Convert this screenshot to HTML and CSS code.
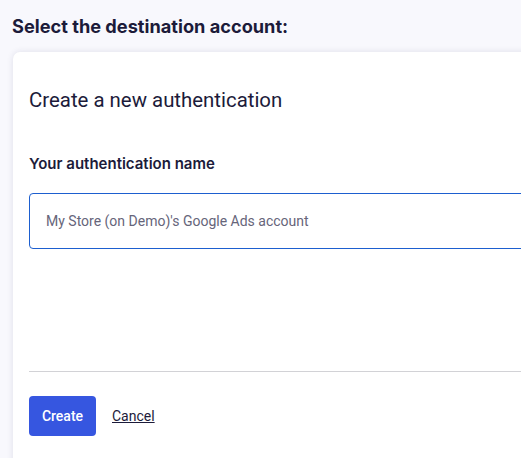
FILE: index.html
```html
<!DOCTYPE html>
<html>
<head>
<meta charset="utf-8">
<link rel="stylesheet" href="styles.css">
</head>
<body>
<div class="page">
  <h1 class="title">Select the destination account:</h1>
  <div class="card">
    <h2 class="card-title">Create a new authentication</h2>
    <label class="label">Your authentication name</label>
    <div class="input">My Store (on Demo)'s Google Ads account</div>
    <div class="spacer"></div>
    <hr class="divider">
    <div class="actions">
      <button class="btn">Create</button>
      <a class="link">Cancel</a>
    </div>
  </div>
</div>
</body>
</html>
```
FILE: styles.css
```css
html, body {
  margin: 0;
  padding: 0;
  background: #f8f8fd;
  overflow: hidden;
}
.page {
  width: 521px;
  height: 458px;
  overflow: hidden;
  font-family: Roboto, "Liberation Sans", sans-serif;
  color: #1c1b3a;
}
.title {
  margin: 0;
  padding: 14px 0 0 12px;
  font-family: Inter, Roboto, sans-serif;
  font-weight: 700;
  font-size: 18.2px;
  line-height: 24px;
  color: #1c1b3a;
}
.card {
  margin: 14px 0 0 13px;
  width: 560px;
  height: 420px;
  background: #fff;
  border-radius: 7px 0 0 0;
  box-shadow: 0 0 6px rgba(40, 40, 90, 0.12);
  padding: 36px 16px 0 16px;
  box-sizing: border-box;
}
.card-title {
  margin: 0;
  font-weight: 400;
  font-size: 20.4px;
  line-height: 24px;
  color: #1c1b3a;
}
.label {
  display: block;
  margin-top: 42px;
  font-family: Inter, Roboto, sans-serif;
  font-weight: 600;
  font-size: 15px;
  line-height: 20px;
}
.input {
  margin-top: 19px;
  width: 520px;
  height: 56px;
  box-sizing: border-box;
  border: 1px solid #1d5fcf;
  border-radius: 4px;
  padding: 0 16px;
  display: flex;
  align-items: center;
  font-size: 14px;
  color: #66657a;
}
.spacer {
  height: 122px;
}
.divider {
  margin: 0;
  border: 0;
  border-top: 1px solid #d2d2d6;
  width: 520px;
}
.actions {
  margin-top: 24px;
  display: flex;
  align-items: center;
  gap: 16px;
}
.btn {
  width: 67px;
  height: 40px;
  border: 0;
  border-radius: 4px;
  background: #3656e0;
  color: #fff;
  font-family: Roboto, sans-serif;
  font-weight: 500;
  font-size: 14px;
  padding: 0;
}
.link {
  font-size: 14px;
  color: #1c1b3a;
  text-decoration: underline;
}
```
